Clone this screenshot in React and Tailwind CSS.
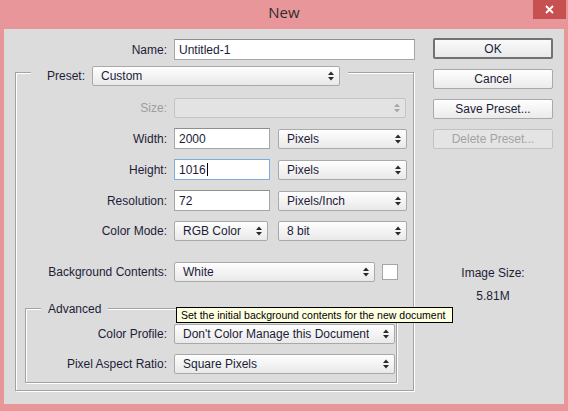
import React from "react";

const Arrows = ({ disabled }) => (
  <svg width="6" height="10" viewBox="0 0 6 10" className="shrink-0">
    <path d="M0 4 L3 0.5 L6 4 Z" fill={disabled ? "#a8a8a8" : "#2a2a2a"} />
    <path d="M0 6 L3 9.5 L6 6 Z" fill={disabled ? "#a8a8a8" : "#2a2a2a"} />
  </svg>
);

const Select = ({ w, children, disabled, h = "h-[20px]" }) => (
  <div
    className={`${w} ${h} shrink-0 flex items-center justify-between pl-[8px] pr-[5px] rounded-[2px] border ${
      disabled
        ? "border-[#c4c4c4] bg-[#e3e3e3]"
        : "border-[#a9a9a9] bg-gradient-to-b from-[#fefefe] to-[#e9e9e9]"
    }`}
  >
    <span className="truncate">{children}</span>
    <Arrows disabled={disabled} />
  </div>
);

const Input = ({ w, children, focused }) => (
  <div
    className={`${w} h-[21px] shrink-0 flex items-center pl-[4px] bg-white border ${
      focused ? "border-[#7aaee0]" : "border-[#a6a6a6] border-t-[#8f8f8f]"
    }`}
  >
    <span>{children}</span>
    {focused && <span className="w-px h-[13px] bg-black ml-[1px]" />}
  </div>
);

const Label = ({ w, children, grey }) => (
  <div className={`${w} shrink-0 text-right ${grey ? "text-[#9c9c9c]" : ""}`}>{children}</div>
);

const Button = ({ children, primary, disabled }) => (
  <div
    className={`w-[120px] flex items-center justify-center rounded-[2px] ${
      primary
        ? "h-[21px] border-2 border-[#727272] bg-gradient-to-b from-[#fafafa] to-[#e9e9e9]"
        : disabled
        ? "h-[20px] border border-[#c2c2c2] bg-[#e4e4e4] text-[#a3a3a3]"
        : "h-[20px] border border-[#a9a9a9] bg-gradient-to-b from-[#fefefe] to-[#ebebeb]"
    }`}
  >
    {children}
  </div>
);

export default function App() {
  return (
    <div
      className="w-[568px] h-[411px] bg-[#e9969a] flex flex-col text-[12px] leading-[14px] text-[#1c1c38] overflow-hidden"
      style={{ fontFamily: '"Liberation Sans", Arial, sans-serif' }}
    >
      {/* Title bar */}
      <div className="relative h-[29px] shrink-0 flex items-start justify-center">
        <div
          className="mt-[3px] text-[15px] leading-[18px] text-[#2d2d2d]"
          style={{ fontFamily: '"Open Sans", "Noto Sans", sans-serif' }}
        >
          New
        </div>
        <div className="absolute top-0 right-[2px] w-[33px] h-[19px] bg-[#c75050] flex items-center justify-center">
          <svg width="9" height="9" viewBox="0 0 9 9">
            <path d="M1 1 L8 8 M8 1 L1 8" stroke="#fff" strokeWidth="1.8" />
          </svg>
        </div>
      </div>

      {/* Client */}
      <div className="relative mx-[4px] mb-[7px] flex-1 bg-[#dcdcdc] flex">
        {/* Left column */}
        <div className="w-[420px] shrink-0 pt-[10px] flex flex-col">
          <div className="flex items-center h-[21px]">
            <Label w="w-[163px]">Name:</Label>
            <div className="ml-[7px]">
              <Input w="w-[241px]">Untitled-1</Input>
            </div>
          </div>

          {/* Preset group */}
          <div className="mt-[12px] ml-[11px] w-[399px] border border-[#a2a2a2] shadow-[1px_1px_0_#ffffff,inset_1px_1px_0_#ffffff] pb-[7px]">
            <div className="-mt-[7px] ml-[15px] w-[317px] h-[20px] bg-[#dcdcdc] flex items-center pl-[16px] pr-[8px]">
              <span>Preset:</span>
              <div className="ml-auto">
                <Select w="w-[248px]">Custom</Select>
              </div>
            </div>

            <div className="mt-[12px] flex items-center h-[20px]">
              <Label w="w-[151px]" grey>Size:</Label>
              <div className="ml-[7px]">
                <Select w="w-[232px]" disabled>{""}</Select>
              </div>
            </div>

            <div className="mt-[10px] flex items-center h-[21px]">
              <Label w="w-[151px]">Width:</Label>
              <div className="ml-[7px] flex items-center gap-[8px]">
                <Input w="w-[96px]">2000</Input>
                <Select w="w-[129px]">Pixels</Select>
              </div>
            </div>

            <div className="mt-[10px] flex items-center h-[21px]">
              <Label w="w-[151px]">Height:</Label>
              <div className="ml-[7px] flex items-center gap-[8px]">
                <Input w="w-[96px]" focused>1016</Input>
                <Select w="w-[129px]">Pixels</Select>
              </div>
            </div>

            <div className="mt-[10px] flex items-center h-[21px]">
              <Label w="w-[151px]">Resolution:</Label>
              <div className="ml-[7px] flex items-center gap-[8px]">
                <Input w="w-[96px]">72</Input>
                <Select w="w-[129px]">Pixels/Inch</Select>
              </div>
            </div>

            <div className="mt-[10px] flex items-center h-[20px]">
              <Label w="w-[151px]">Color Mode:</Label>
              <div className="ml-[7px] flex items-center gap-[10px]">
                <Select w="w-[94px]">RGB Color</Select>
                <Select w="w-[129px]">8 bit</Select>
              </div>
            </div>

            <div className="mt-[21px] flex items-center h-[20px]">
              <Label w="w-[151px]">Background Contents:</Label>
              <div className="ml-[7px] flex items-center gap-[7px]">
                <Select w="w-[201px]">White</Select>
                <div className="w-[16px] h-[16px] bg-white border border-[#a6a6a6]" />
              </div>
            </div>

            {/* Advanced group */}
            <div className="mt-[26px] ml-[9px] w-[372px] border border-[#a2a2a2] shadow-[1px_1px_0_#ffffff,inset_1px_1px_0_#ffffff] pb-[8px]">
              <div className="-mt-[8px] ml-[15px] w-fit h-[16px] leading-[16px] px-[7px] bg-[#dcdcdc]">
                Advanced
              </div>
              <div className="mt-[7px] flex items-center h-[20px]">
                <Label w="w-[141px]">Color Profile:</Label>
                <div className="ml-[7px]">
                  <Select w="w-[221px]">Don't Color Manage this Document</Select>
                </div>
              </div>
              <div className="mt-[10px] flex items-center h-[20px]">
                <Label w="w-[141px]">Pixel Aspect Ratio:</Label>
                <div className="ml-[7px]">
                  <Select w="w-[221px]">Square Pixels</Select>
                </div>
              </div>
            </div>
          </div>
        </div>

        {/* Right column */}
        <div className="ml-[9px] w-[120px] pt-[9px] flex flex-col items-center">
          <Button primary>OK</Button>
          <div className="mt-[10px]"><Button>Cancel</Button></div>
          <div className="mt-[10px]"><Button>Save Preset...</Button></div>
          <div className="mt-[10px]"><Button disabled>Delete Preset...</Button></div>
          <div className="mt-[117px] leading-[15px]">Image Size:</div>
          <div className="mt-[8px] leading-[15px]">5.81M</div>
        </div>

        {/* Tooltip */}
        <div className="absolute left-[172px] top-[278px] w-[277px] h-[16px] bg-[#ffffe1] border border-black text-[10.5px] leading-[14px] pl-[4px] text-black whitespace-nowrap">
          Set the initial background contents for the new document
        </div>
      </div>
    </div>
  );
}
